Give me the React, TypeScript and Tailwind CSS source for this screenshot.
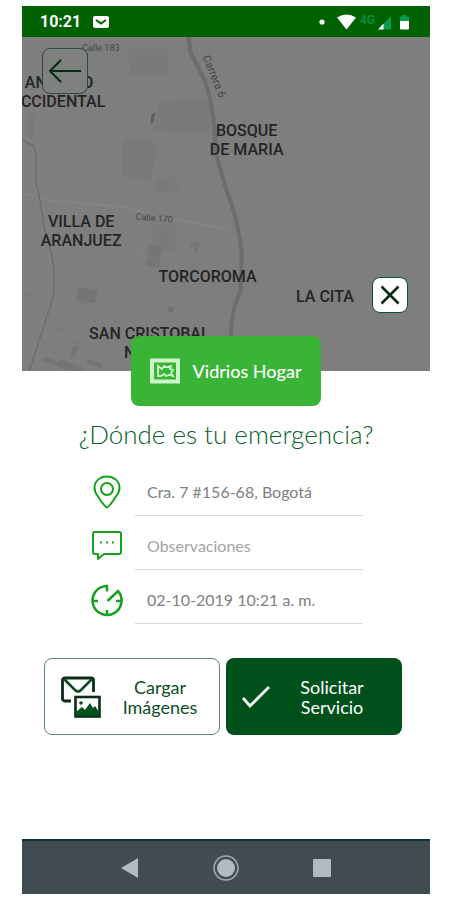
const gothic = "font-['Lato','Open_Sans',sans-serif]";

const mapLabels = [
  { x: 37, y: 51, text: "ANTIGUO" },
  { x: 41, y: 70, text: "CCIDENTAL" },
  { x: 224, y: 99, text: "BOSQUE" },
  { x: 224, y: 118, text: "DE MARIA" },
  { x: 59, y: 189, text: "VILLA DE" },
  { x: 59, y: 208, text: "ARANJUEZ" },
  { x: 185, y: 244, text: "TORCOROMA" },
  { x: 302, y: 264, text: "LA CITA" },
  { x: 127, y: 301, text: "SAN CRISTOBAL" },
  { x: 127, y: 320, text: "NORTE" },
];

function StatusBar() {
  return (
    <div className="flex h-[31px] items-center justify-between bg-[#006100] pr-5 pl-[18px] text-white">
      <div className="flex items-center gap-3">
        <span className="text-base font-bold">10:21</span>
        <svg className="h-3 w-4" viewBox="0 0 16 12">
          <rect width="16" height="12" rx="2" fill="#fff" />
          <path d="M3 4l5 3.500L13 4" fill="none" stroke="#006100" strokeWidth="2" />
        </svg>
      </div>
      <svg className="h-4 w-[92px]" viewBox="0 0 92 16">
        <circle cx="4" cy="8" r="2.600" fill="#fff" />
        <path d="M19 3.500Q28.500-2.500 38 3.500L28.500 15.500Z" fill="#fff" />
        <text x="42" y="10" fontSize="12" fontWeight="500" fill="#079447">4G</text>
        <path d="M73 2v13.500H60Z" fill="#0a9a50" />
        <path d="M65.500 9.500v6H60Z" fill="#fff" />
        <path d="M82 7V2.500h2.500V1h4v1.500H91V7Z" fill="#0a9a50" />
        <path d="M82 7h9v7.500q0 1-1 1h-7q-1 0-1-1Z" fill="#fff" />
      </svg>
    </div>
  );
}

function MapBackdrop() {
  return (
    <svg
      className="block h-full w-full"
      viewBox="0 0 408 333"
      preserveAspectRatio="xMinYMin slice"
      role="img"
      aria-label="Mapa de Bogotá"
    >
      <rect width="408" height="333" fill="#7e7e7e" />
      <g fill="#7a7a7a">
        <path d="M136 65l49-4 5 27-7 9-50-4Z" />
        <path d="M101 102h27l7 9-6 31-28-3Z" />
        <path d="M133 142l19-4 5 15-22 2Z" />
        <path d="M105 12h41v26h-38Z" />
        <path d="M130 187h23v25h-22Z" />
        <path d="M6 78h6v24H6Z" />
      </g>
      <g fill="#757575">
        <path d="M57 249l18 3-3 16-19-4Z" />
        <path d="M127 208l12 2-3 20-12-2Z" />
        <path d="M23 319l16 5-3 4-16-5Z" />
        <path d="M37 321l26 9-3 6-24-6Z" />
        <path d="M52 307l4 1-4 13-4-2Z" />
        <path d="M65 321l16 5-2 4-15-5Z" />
        <path d="M167 206l10-2-2 12-3-1 1-6-5 1Z" />
      </g>
      <path d="M129 77l4-2-2 10-3 2Z" fill="#606060" />
      <circle cx="148" cy="272" r="3" fill="#707070" />
      <g fill="none" stroke="#858585">
        <path d="M0 156l30 7 76 7 30 9 72 13" strokeWidth="1.500" />
        <path d="M0 250l43 10 52 12M0 291l60 9 50 19" />
        <path d="M99 0l1 75-2 60 8 38-1 80-3 80M120 165l-1 60" strokeWidth="0.500" />
        <path d="M0 36l78-4 20 6M0 70l55 4M110 215l90 24M112 242l75 17M117 178l-2 110" strokeWidth="0.500" />
        <path d="M280 12l8 26 12 9 10-3M300 0l-2 14 14 28" strokeWidth="0.500" />
      </g>
      <g fill="none" stroke="#6d6d6d">
        <path d="M0 103l11 5q3 5 3 10v27l4 18 4 27q14 39 9 70L7 333" strokeWidth="1.500" />
        <path d="M166 0l2 15 15 30q10 33 10 70l10 35q13 33 16 66l-1 38q-9 15-10 46" strokeWidth="4" />
      </g>
      <g fill="#484848" fontSize="9" stroke="none">
        <text x="60" y="14">Calle 183</text>
        <text x="113" y="182" transform="rotate(5 113 182)">Calle 170</text>
        <text x="180" y="20" fontSize="11" transform="rotate(68 180 20)">Carrera 6</text>
      </g>
      <g fill="#242424" fontSize="16" fontWeight="500" textAnchor="middle">
        {mapLabels.map((label) => (
          <text key={label.text} x={label.x} y={label.y}>{label.text}</text>
        ))}
      </g>
    </svg>
  );
}

function FrameIcon() {
  return (
    <svg className="h-[26px] w-[30px] shrink-0" viewBox="0 0 30 26" fill="none" stroke="#cdf5c7">
      <rect x="2" y="2.500" width="26" height="21" strokeWidth="4" />
      <path d="M8 18V8l4 3 2-3 3 1 4-1-1 3 3 1-2 3 2 3-4-1-3 1-2-2-3 2Z" strokeWidth="1.800" />
    </svg>
  );
}

function PinIcon() {
  return (
    <svg className="h-[34px] w-8" viewBox="0 0 32 34" fill="none" stroke="#16a01b" strokeWidth="2">
      <path d="M16 32.500Q13.500 31.500 7 21.500 3.500 17 3.500 13C3.500 6 9 1.500 16 1.500S28.500 6 28.500 13q0 4-3.500 8.500-6.500 10-9 11Z" />
      <circle cx="16" cy="14" r="6" />
    </svg>
  );
}

function CommentIcon() {
  return (
    <svg className="h-[34px] w-8" viewBox="0 0 32 34" fill="none" stroke="#16a01b" strokeWidth="2">
      <path d="M4 3h24q2 0 2 2v18q0 2-2 2H13l-6 5v-5H4q-2 0-2-2V5q0-2 2-2Z" strokeLinejoin="round" />
      <path d="M9 13.500h2M15 13.500h2M21 13.500h2" />
    </svg>
  );
}

function ClockIcon() {
  return (
    <svg className="h-[34px] w-8" viewBox="0 0 32 34" fill="none" stroke="#16a01b" strokeWidth="2.500">
      <path d="M16 8.500V3A14.500 14.500 0 1 0 27 8L16.500 18" />
      <path d="M2 18h5M25 18h5M16 32v-5" />
    </svg>
  );
}

function UploadIcon() {
  return (
    <svg className="h-[42px] w-10 shrink-0" viewBox="0 0 40 42" fill="none">
      <path d="M10 25H4q-2.500 0-2.500-2.500V4Q1.500 2 4 2h26q2.500 0 2.500 2.500V16" stroke="#0b2c18" strokeWidth="2.800" />
      <path d="M3 3l11 11q3 3 6 0L31 3" stroke="#0b4a20" strokeWidth="2.500" />
      <rect x="14.500" y="21" width="24" height="19.500" stroke="#0b2c18" strokeWidth="2.600" />
      <path d="M15 40v-4l6-5 3 3 5-7 3 5 2-2 4 6v4Z" fill="#00521c" />
      <circle cx="20" cy="27" r="1.800" fill="#0b4a20" />
    </svg>
  );
}

const inputClass =
  "h-12 min-w-0 flex-1 border-b border-[#d5d9e2] bg-transparent px-3 text-base text-[#808080] outline-none placeholder:text-[#a3a3a3]";

export default function App() {
  return (
    <div className="min-h-screen bg-white pt-1.5 pr-5 pb-1.5 pl-[22px] font-['Roboto',sans-serif]">
      <div className="flex min-h-[calc(100vh-12px)] flex-col">
        <StatusBar />
        <div className="relative h-[334px] overflow-hidden">
          <MapBackdrop />
          <button
            type="button"
            aria-label="Volver"
            className="absolute top-[11px] left-5 grid size-[46px] place-items-center rounded-lg border border-[#2c4a41] bg-[#7f817f]"
          >
            <svg className="h-6 w-8" viewBox="0 0 32 24" fill="none" stroke="#062b14" strokeWidth="2.200">
              <path d="M32 12H1M12 1L1 12l11 11" />
            </svg>
          </button>
          <button
            type="button"
            aria-label="Cerrar"
            className="absolute right-[22px] bottom-[58px] grid size-9 place-items-center rounded-lg border border-[#0f4f32] bg-white"
          >
            <svg className="size-5" viewBox="0 0 20 20" fill="none" stroke="#062b14" strokeWidth="2.600">
              <path d="M1.500 1.500l17 17M18.500 1.500l-17 17" />
            </svg>
          </button>
        </div>

        <main className={`relative -mt-[35px] flex-1 ${gothic}`}>
          <div className="mx-auto flex h-[70px] w-[190px] items-center justify-center gap-3 rounded-lg bg-[#39b437] text-lg text-white">
            <FrameIcon />
            <span className="font-medium">Vidrios Hogar</span>
          </div>
          <h1 className="mt-3 text-center text-[26px] leading-8 font-light text-[#086028]">¿Dónde es tu emergencia?</h1>

          <form className="mt-[18px]">
            <div className="flex flex-col gap-1.5 pr-[67px] pl-[69px]">
              <div className="flex items-center">
                <label htmlFor="direccion" aria-label="Dirección" className="w-11 shrink-0"><PinIcon /></label>
                <input id="direccion" className={inputClass} defaultValue="Cra. 7 #156-68, Bogotá" />
              </div>
              <div className="flex items-center">
                <label htmlFor="observaciones" aria-label="Observaciones" className="w-11 shrink-0"><CommentIcon /></label>
                <input id="observaciones" className={inputClass} placeholder="Observaciones" />
              </div>
              <div className="flex items-center">
                <label htmlFor="fecha" aria-label="Fecha y hora" className="w-11 shrink-0"><ClockIcon /></label>
                <input id="fecha" className={inputClass} defaultValue="02-10-2019 10:21 a. m." />
              </div>
            </div>

            <div className="mt-[34px] grid grid-cols-2 gap-1.5 pr-7 pl-[22px]">
              <button
                type="button"
                className="flex h-[77px] items-center rounded-lg border border-[#5f8573] bg-white px-4 text-lg leading-5 text-[#0b4f28]"
              >
                <UploadIcon />
                <span className="flex-1 pl-4">Cargar<br />Imágenes</span>
              </button>
              <button
                type="button"
                className="flex h-[77px] items-center rounded-lg bg-[#00501c] px-4 text-lg leading-5 text-white"
              >
                <svg className="h-6 w-7 shrink-0" viewBox="0 0 28 24" fill="none" stroke="#fff" strokeWidth="2.800">
                  <path d="M1 13l7 8L27 2" />
                </svg>
                <span className="flex-1 pl-2">Solicitar<br />Servicio</span>
              </button>
            </div>
          </form>
        </main>

        <nav className="flex h-[55px] items-center justify-center gap-[68px] border-t-2 border-[#0b3438] bg-[#404c50]">
          <button type="button" aria-label="Atrás">
            <svg className="size-7" viewBox="0 0 28 28"><path d="M22 4v20L5 14Z" fill="#b2babf" /></svg>
          </button>
          <button type="button" aria-label="Inicio">
            <svg className="size-7" viewBox="0 0 28 28">
              <circle cx="14" cy="14" r="12" fill="none" stroke="#a5afb2" strokeWidth="1.500" />
              <circle cx="14" cy="14" r="9" fill="#b2babf" />
            </svg>
          </button>
          <button type="button" aria-label="Recientes">
            <svg className="size-7" viewBox="0 0 28 28"><rect x="5" y="5" width="18" height="18" rx="1" fill="#b2babf" /></svg>
          </button>
        </nav>
      </div>
    </div>
  );
}
